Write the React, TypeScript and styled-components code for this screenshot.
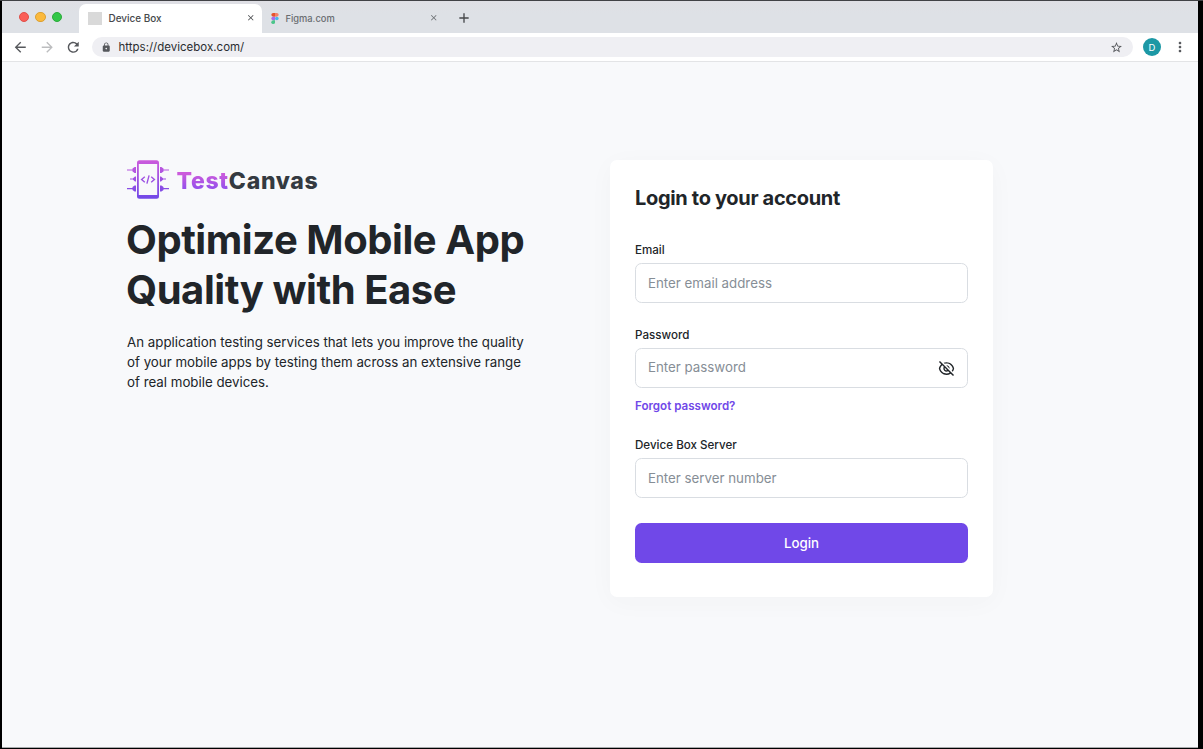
import React from 'react';
import styled, { createGlobalStyle } from 'styled-components';
import { MdArrowBack, MdArrowForward, MdRefresh, MdLock, MdStarBorder, MdMoreVert, MdClose, MdAdd } from 'react-icons/md';
import { RiEyeOffLine } from 'react-icons/ri';

const GlobalStyle = createGlobalStyle`
  * { box-sizing: border-box; }
  body { margin: 0; background: #000; font-family: Inter, "Liberation Sans", sans-serif; color: #212529; }
  h1, h2, p { margin: 0; }
  svg { display: block; flex: none; }
`;

const Window = styled.div`
  height: 749px;
  padding: 1px 5px 1px 2px;
  background: linear-gradient(#414246 1px, #000 1px);
  display: flex;
  flex-direction: column;
`;

const TabStrip = styled.div`
  height: 32px;
  flex: none;
  display: flex;
  background: linear-gradient(#dfdfe5, #dee1e6 12px);
`;

const Lights = styled.div`
  width: 77px;
  padding: 10.5px 0 0 16.5px;
  display: flex;
  gap: 6px;
`;

const Light = styled.span<{ $fill: string; $edge: string }>`
  width: 10.5px;
  height: 10.5px;
  border-radius: 50%;
  background: ${p => p.$fill};
  border: 0.5px solid ${p => p.$edge};
`;

const Tab = styled.div<{ $active?: boolean }>`
  width: 183px;
  margin-top: 3px;
  padding: 0 7px 1px 9px;
  display: flex;
  align-items: center;
  border-radius: 7px 7px 0 0;
  background: ${p => (p.$active ? '#fff' : 'transparent')};
  color: ${p => (p.$active ? '#45474a' : '#696c70')};
  font-size: ${p => (p.$active ? 9.95 : 9.3)}px;
`;

const TabLabel = styled.span<{ $gap: number }>`
  flex: 1;
  margin-left: ${p => p.$gap}px;
  font-weight: 500;
`;

const BlankFavicon = styled.span`
  width: 14px;
  height: 13px;
  background: #d9d9d9;
`;

const NewTab = styled.div`
  padding: 9px 0 0 11px;
  color: #45474a;
`;

const Toolbar = styled.div`
  height: 29px;
  flex: none;
  display: flex;
  align-items: center;
  padding: 0 10px 0 10px;
  background: #fff;
  border-bottom: 1px solid #e3e4e6;
  color: #56585c;
`;

const NavIcons = styled.div`
  width: 80px;
  display: flex;
  gap: 10px;
`;

const AddressBar = styled.div`
  flex: 1;
  height: 20px;
  border-radius: 10px;
  background: #efeff3;
  display: flex;
  align-items: center;
  padding: 0 10px 0 9px;
`;

const Url = styled.span`
  flex: 1;
  margin-left: 7px;
  font-size: 11.5px;
  line-height: 20px;
  color: #2b2d30;
`;

const Avatar = styled.div`
  width: 18px;
  height: 18px;
  margin: 0 11px 0 10px;
  border-radius: 50%;
  background: #1c98a5;
  color: #fff;
  font-size: 9.5px;
  line-height: 19px;
  text-align: center;
`;

const Page = styled.main`
  flex: 1;
  display: flex;
  align-items: flex-start;
  padding: 98px 0 0 125px;
  background: #f8f9fb;
  border-bottom: 1px solid #a9aaac;
`;

const Intro = styled.section`
  width: 483px;
`;

const Brand = styled.div`
  height: 39px;
  display: flex;
  align-items: center;
  gap: 7.5px;
`;

const BrandName = styled.div`
  font-size: 23px;
  line-height: 38px;
  padding-top: 2px;
  font-weight: 800;
  letter-spacing: 0.7px;
  color: #343a40;
`;

const BrandAccent = styled.span`
  background: linear-gradient(#cc5bdc 25%, #9a52ea 72%);
  background-clip: text;
  -webkit-background-clip: text;
  color: transparent;
`;

const Headline = styled.h1`
  margin: 16px 0 0 -1px;
  font-size: 40px;
  line-height: 50px;
  font-weight: 700;
  letter-spacing: -0.44px;
  white-space: nowrap;
`;

const Lead = styled.p`
  margin-top: 17px;
  font-size: 13.3px;
  line-height: 20px;
  white-space: nowrap;
`;

const Card = styled.form`
  width: 383px;
  height: 436.5px;
  padding: 23px 25px 0;
  border-radius: 7px;
  background: #fff;
  box-shadow: 0 5px 26px rgba(50, 55, 70, 0.03);
`;

const CardTitle = styled.h2`
  font-size: 20px;
  line-height: 30px;
  font-weight: 700;
  letter-spacing: -0.33px;
`;

const Field = styled.div<{ $top: number }>`
  margin-top: ${p => p.$top}px;
`;

const Label = styled.label`
  display: block;
  font-size: 11.6px;
  line-height: 16px;
  font-weight: 500;
  margin-bottom: 5px;
`;

const InputBox = styled.div`
  height: 40px;
  display: flex;
  align-items: center;
  padding: 0 12px;
  border: 1px solid #d9dde2;
  border-radius: 6.5px;
`;

const Input = styled.input<{ $lift?: number }>`
  flex: 1;
  min-width: 0;
  padding: 0 0 ${p => p.$lift || 0}px;
  border: 0;
  outline: 0;
  background: none;
  font: 13.3px/20px Inter, sans-serif;
  &::placeholder { color: #868e96; opacity: 1; }
`;

const Forgot = styled.a`
  display: block;
  margin-top: 10px;
  font-size: 11.6px;
  line-height: 16px;
  font-weight: 600;
  color: #7048e8;
`;

const LoginButton = styled.button`
  display: block;
  width: 100%;
  height: 40px;
  margin-top: 25px;
  padding: 0;
  border: 0;
  border-radius: 6.5px;
  background: #7048e8;
  color: #fff;
  font: 500 13.3px Inter, sans-serif;
`;

const FigmaIcon = () => (
  <svg width="8" height="11" viewBox="0 0 8 12">
    <path d="M2 0h2v4H2a2 2 0 0 1 0-4z" fill="#e6532c" />
    <path d="M4 0h2a2 2 0 0 1 0 4H4z" fill="#f58068" />
    <path d="M2 4h2v4H2a2 2 0 0 1 0-4z" fill="#a66bec" />
    <circle cx="6" cy="6" r="2" fill="#45b8ed" />
    <path d="M2 8h2v2a2 2 0 1 1-2-2z" fill="#4bc58b" />
  </svg>
);

const DeviceLogo = () => (
  <svg width="42" height="39" viewBox="0 0 42 39" fill="none">
    <defs>
      <linearGradient id="device" x1="0" y1="0" x2="0" y2="39" gradientUnits="userSpaceOnUse">
        <stop stopColor="#cc5bdc" />
        <stop offset="1" stopColor="#7048e8" />
      </linearGradient>
    </defs>
    <path fillRule="evenodd" fill="url(#device)" d="M12.5 0.300h17a2.500 2.500 0 0 1 2.500 2.500v33.500a2.500 2.500 0 0 1-2.500 2.500h-17a2.500 2.500 0 0 1-2.500-2.500v-33.500A2.500 2.500 0 0 1 12.500 0.300zM11.800 4v31h18.400V4z" />
    <path fill="url(#device)" d="M9 7v6H7.600L5.500 11.600V8.400L7.600 7zM9 16.500v5H8l-2-1.700v-1.600L8 16.500zM9 25.500v6H7.600L5.500 30.100v-3.200l2.100-1.400zM33 7v6h1.400l2.100-1.400V8.400L34.400 7zM33 16.500v5h1l2-1.700v-1.600L34 16.500zM33 25.500v6h1.400l2.100-1.400v-3.200l-2.100-1.400z" />
    <path fill="url(#device)" d="M0 9.400h7v1.200H0zM3 18.400h4v1.200H3zM0 28h7v1.200H0zM35 9.400h7v1.200h-7zM35 18.400h4v1.200h-4zM35 28h7v1.200h-7z" />
    <path stroke="url(#device)" strokeWidth="1.400" d="M17.800 16.800l-3.200 2.700 3.200 2.700M24.200 16.800l3.200 2.700-3.200 2.700M22.100 15.400l-2.200 8.200" />
  </svg>
);

export default function App() {
  return (
    <>
      <GlobalStyle />
      <Window>
        <TabStrip>
          <Lights>
            <Light $fill="#fa5e57" $edge="#e0504a" />
            <Light $fill="#fbb93c" $edge="#dba032" />
            <Light $fill="#33c748" $edge="#2cab3b" />
          </Lights>
          <Tab $active>
            <BlankFavicon />
            <TabLabel $gap={6.5}>Device Box</TabLabel>
            <MdClose size={9.5} />
          </Tab>
          <Tab>
            <FigmaIcon />
            <TabLabel $gap={6.5}>Figma.com</TabLabel>
            <MdClose size={9.5} />
          </Tab>
          <NewTab><MdAdd size={16} /></NewTab>
        </TabStrip>
        <Toolbar>
          <NavIcons>
            <MdArrowBack size={16.5} />
            <MdArrowForward size={16.5} color="#bcbdbf" />
            <MdRefresh size={16.5} />
          </NavIcons>
          <AddressBar>
            <MdLock size={10.5} />
            <Url>https://devicebox.com/</Url>
            <MdStarBorder size={13} />
          </AddressBar>
          <Avatar>D</Avatar>
          <MdMoreVert size={16} />
        </Toolbar>
        <Page>
          <Intro>
            <Brand>
              <DeviceLogo />
              <BrandName><BrandAccent>Test</BrandAccent>Canvas</BrandName>
            </Brand>
            <Headline>Optimize Mobile App<br />Quality with Ease</Headline>
            <Lead>
              An application testing services that lets you improve the quality<br />
              of your mobile apps by testing them across an extensive range<br />
              of real mobile devices.
            </Lead>
          </Intro>
          <Card>
            <CardTitle>Login to your account</CardTitle>
            <Field $top={29}>
              <Label htmlFor="email">Email</Label>
              <InputBox><Input id="email" placeholder="Enter email address" /></InputBox>
            </Field>
            <Field $top={24}>
              <Label htmlFor="password">Password</Label>
              <InputBox>
                <Input id="password" placeholder="Enter password" $lift={2} />
                <RiEyeOffLine size={17} />
              </InputBox>
            </Field>
            <Forgot>Forgot password?</Forgot>
            <Field $top={23}>
              <Label htmlFor="server">Device Box Server</Label>
              <InputBox><Input id="server" placeholder="Enter server number" /></InputBox>
            </Field>
            <LoginButton type="button">Login</LoginButton>
          </Card>
        </Page>
      </Window>
    </>
  );
}
